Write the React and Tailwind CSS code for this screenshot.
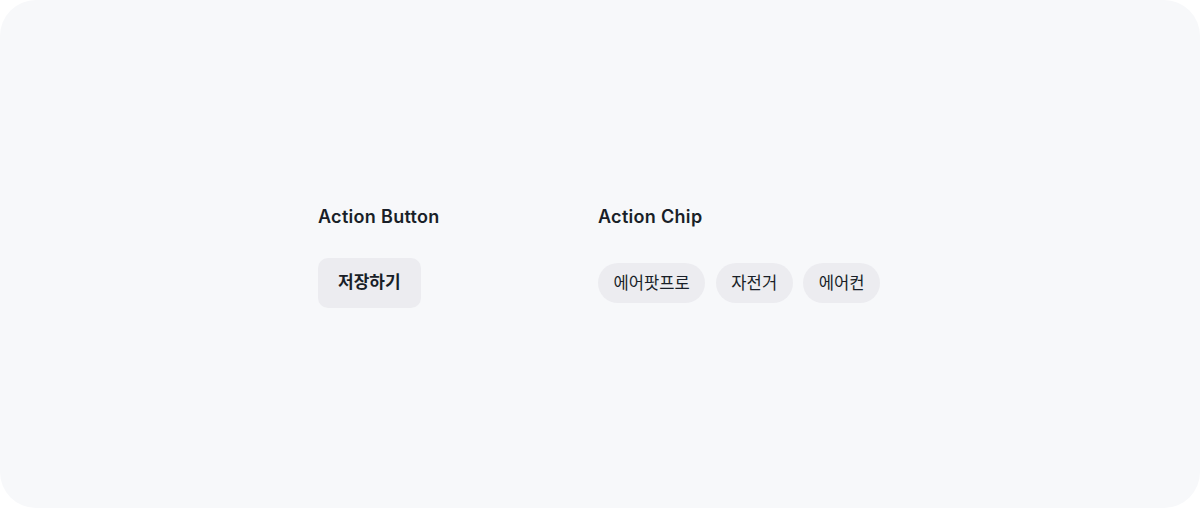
const font = {
  fontFamily: '"Inter", "Noto Sans CJK KR", sans-serif',
};

const chips = ["에어팟프로", "자전거", "에어컨"];

export default function App() {
  return (
    <div className="w-[1200px] h-[508px] bg-white" style={font}>
      <div className="w-full h-full rounded-[36px] bg-[#f7f8fa] flex items-center justify-center pt-[5px] pr-[2px]">
        <div className="flex w-[562px]">
          {/* BUTTON */}
          <div className="w-[280px]">
            <h3 className="text-[18px] leading-[24px] font-semibold tracking-[0.3px] text-[#191f28]">
              Action Button
            </h3>
            <div className="mt-[29px] h-[50px] flex items-center">
              <button className="h-[50px] px-[20px] rounded-[10px] bg-[#ececf0] text-[17px] font-semibold text-[#191f28]">
                저장하기
              </button>
            </div>
          </div>

          {/* CHIPS */}
          <div className="flex-1">
            <h3 className="text-[18px] leading-[24px] font-semibold tracking-[0.3px] text-[#191f28]">
              Action Chip
            </h3>
            <div className="mt-[29px] h-[50px] flex items-center gap-[10.5px]">
              {chips.map((c) => (
                <span
                  key={c}
                  className="h-[40px] px-[15.5px] rounded-full bg-[#ececf0] flex items-center text-[16.6px] text-[#191f28]"
                >
                  {c}
                </span>
              ))}
            </div>
          </div>
        </div>
      </div>
    </div>
  );
}
